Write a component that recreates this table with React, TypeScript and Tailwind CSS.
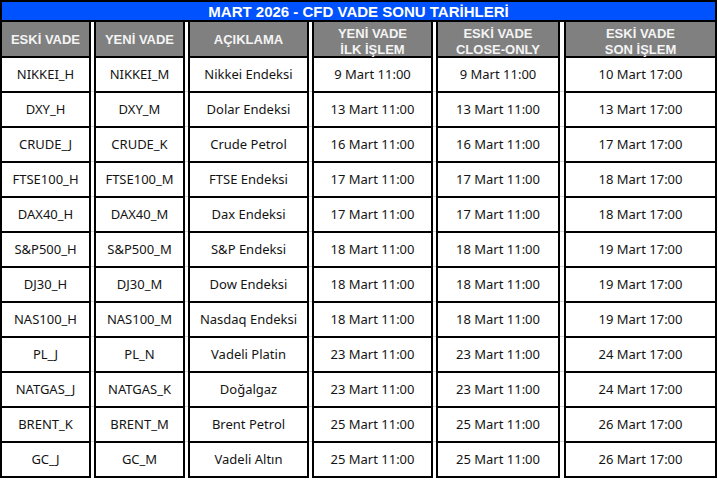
import React from "react";

type Col = { w: string; header: string[]; pt: string; key: number };

const rows: string[][] = [
  ["NIKKEI_H", "NIKKEI_M", "Nikkei Endeksi", "9 Mart 11:00", "9 Mart 11:00", "10 Mart 17:00"],
  ["DXY_H", "DXY_M", "Dolar Endeksi", "13 Mart 11:00", "13 Mart 11:00", "13 Mart 17:00"],
  ["CRUDE_J", "CRUDE_K", "Crude Petrol", "16 Mart 11:00", "16 Mart 11:00", "17 Mart 17:00"],
  ["FTSE100_H", "FTSE100_M", "FTSE Endeksi", "17 Mart 11:00", "17 Mart 11:00", "18 Mart 17:00"],
  ["DAX40_H", "DAX40_M", "Dax Endeksi", "17 Mart 11:00", "17 Mart 11:00", "18 Mart 17:00"],
  ["S&P500_H", "S&P500_M", "S&P Endeksi", "18 Mart 11:00", "18 Mart 11:00", "19 Mart 17:00"],
  ["DJ30_H", "DJ30_M", "Dow Endeksi", "18 Mart 11:00", "18 Mart 11:00", "19 Mart 17:00"],
  ["NAS100_H", "NAS100_M", "Nasdaq Endeksi", "18 Mart 11:00", "18 Mart 11:00", "19 Mart 17:00"],
  ["PL_J", "PL_N", "Vadeli Platin", "23 Mart 11:00", "23 Mart 11:00", "24 Mart 17:00"],
  ["NATGAS_J", "NATGAS_K", "Doğalgaz", "23 Mart 11:00", "23 Mart 11:00", "24 Mart 17:00"],
  ["BRENT_K", "BRENT_M", "Brent Petrol", "25 Mart 11:00", "25 Mart 11:00", "26 Mart 17:00"],
  ["GC_J", "GC_M", "Vadeli Altın", "25 Mart 11:00", "25 Mart 11:00", "26 Mart 17:00"],
];

const cols: Col[] = [
  { key: 0, w: "w-[91px]", header: ["ESKİ VADE"], pt: "pt-[2px]" },
  { key: 1, w: "w-[91px]", header: ["YENİ VADE"], pt: "pt-[2px]" },
  { key: 2, w: "w-[121px]", header: ["AÇIKLAMA"], pt: "pt-[2px]" },
  { key: 3, w: "w-[121px]", header: ["YENİ VADE", "İLK İŞLEM"], pt: "pt-[5px]" },
  { key: 4, w: "w-[124px]", header: ["ESKİ VADE", "CLOSE-ONLY"], pt: "pt-[5px]" },
  { key: 5, w: "w-[153px]", header: ["ESKİ VADE", "SON İŞLEM"], pt: "pt-[5px]" },
];

function Gap({ w }: { w: string }) {
  return (
    <div className={`${w} flex flex-col pt-[69px]`}>
      {Array.from({ length: 11 }).map((_, i) => (
        <div key={i} className="h-[35px] border-t border-[#d6d6d6]" />
      ))}
    </div>
  );
}

function Column({ col }: { col: Col }) {
  return (
    <div className={`${col.w} flex flex-col border-x-2 border-b-2 border-black`}>
      <div
        className={`h-[36px] bg-[#808080] border-b-2 border-black flex flex-col items-center justify-center ${col.pt} text-[13px] leading-[16px] font-bold text-[#f4f4f4]`}
        style={{ fontFamily: '"Liberation Sans", Arial, sans-serif' }}
      >
        {col.header.map((h) => (
          <div key={h}>{h}</div>
        ))}
      </div>
      {rows.map((r, i) => (
        <div
          key={i}
          className={`${i < rows.length - 1 ? "h-[35px] border-b-2 border-black" : "h-[33px]"} flex items-center justify-center text-[13px] text-[#141414]`}
          style={{ fontFamily: '"Noto Sans", sans-serif' }}
        >
          {r[col.key]}
        </div>
      ))}
    </div>
  );
}

export default function App() {
  return (
    <div className="w-[718px] h-[480px] bg-white overflow-hidden">
      <div className="w-[717px]">
        <div
          className="h-[22px] border-2 border-black bg-[#0052ff] flex items-center justify-center text-white font-bold text-[15px] leading-none"
          style={{ fontFamily: '"Liberation Sans", Arial, sans-serif' }}
        >
          MART 2026 - CFD VADE SONU TARİHLERİ
        </div>
        <div className="flex">
          <Column col={cols[0]} />
          <Gap w="w-[3px]" />
          <Column col={cols[1]} />
          <Gap w="w-[3px]" />
          <Column col={cols[2]} />
          <Gap w="w-[3px]" />
          <Column col={cols[3]} />
          <Gap w="w-[3px]" />
          <Column col={cols[4]} />
          <Gap w="w-[4px]" />
          <Column col={cols[5]} />
        </div>
      </div>
    </div>
  );
}
